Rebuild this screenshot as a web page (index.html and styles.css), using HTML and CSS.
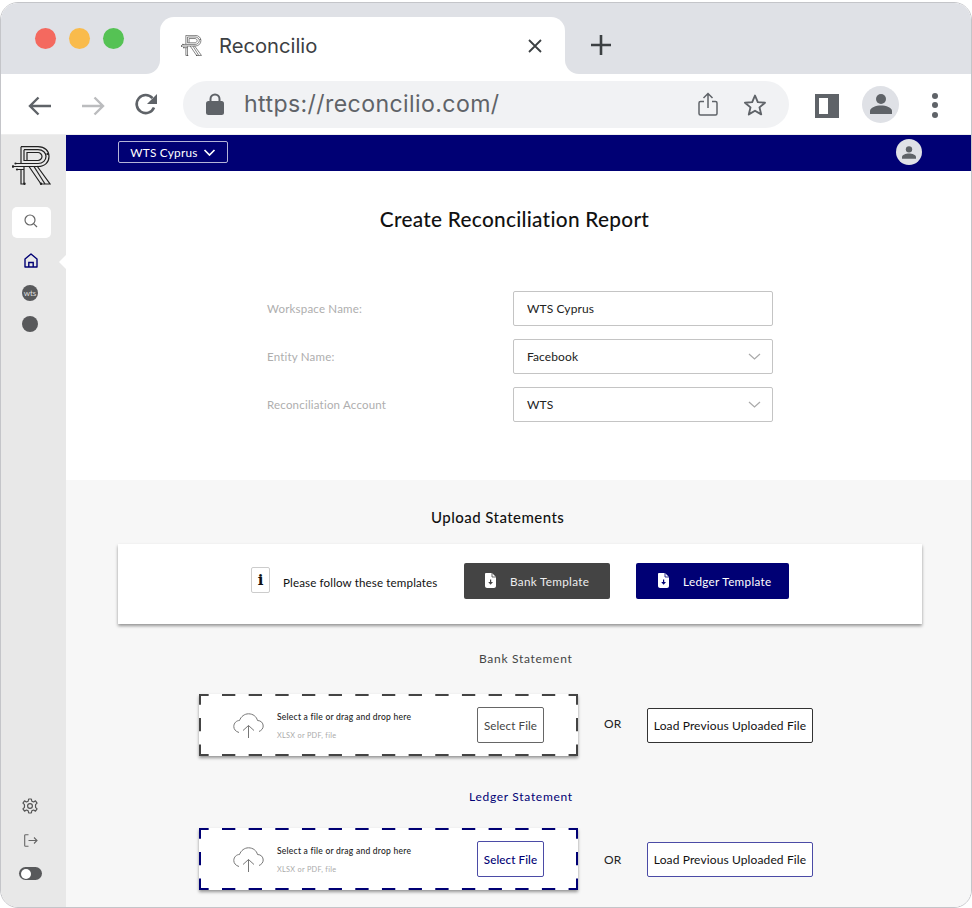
FILE: index.html
```html
<!DOCTYPE html>
<html lang="en">
<head>
<meta charset="utf-8">
<title>Reconcilio</title>
<link rel="stylesheet" href="styles.css">
</head>
<body>
<svg class="defs" width="0" height="0" aria-hidden="true">
  <defs>
    <g id="logo" fill="none" stroke="currentColor" stroke-width="1.2">
      <path d="M9 0.7H26C33 0.7 37 5 37 10.5S33 20.5 26 20.5H0.5"/>
      <path d="M12 3.7H26C31 3.7 34 7 34 10.5S31 17.5 26 17.5H3"/>
      <path d="M12 3.7V14.5H26C28 14.5 30 12.5 30 10.5S28 6.5 26 6.5H15V14.5"/>
      <path d="M9 0.7V17"/>
      <path d="M9 24V38H12V21"/>
      <path d="M5 23.5H12"/>
      <path d="M17 20.5L29 38H38L25 20"/>
      <path d="M22 20.5L33 38"/>
      <g fill="currentColor" stroke="none">
        <circle cx="1" cy="20.5" r="1.3"/>
        <circle cx="3.500" cy="17.500" r="1.100"/>
        <circle cx="5" cy="23.500" r="1.100"/>
        <circle cx="12.500" cy="37.800" r="1.200"/>
        <circle cx="29" cy="37.800" r="1.200"/>
        <circle cx="35.500" cy="8" r="1.100"/>
      </g>
    </g>
    <g id="cloud" fill="none" stroke="#777" stroke-width="1">
      <path d="M6 19.5C2.5 18.5 0.8 16 0.8 13.5C0.8 10 3.5 7.5 6.5 7.5C8 3.5 11.5 0.8 15.5 0.8C20 0.8 23.5 3.5 24.5 7.5C28 7.5 30.2 10 30.2 13C30.2 15.5 28.5 17.5 26 18.5"/>
      <path d="M15.5 25V12.5M10 17.5L15.5 12.5L21 17.5"/>
    </g>
    <g id="doc">
      <path d="M1 0H7L11 4V13C11 14 10 15 9 15H2C1 15 0 14 0 13V1C0 0.5 0.5 0 1 0Z" fill="#fff"/>
      <path d="M7 0V4H11" fill="none" stroke="currentColor" stroke-width="0.8"/>
      <path d="M5 6.5H6.2V9H8L5.6 11.8L3.2 9H5Z" fill="currentColor"/>
    </g>
    <g id="chev">
      <path d="M1 1L6.5 6L12 1" fill="none" stroke="#aaa" stroke-width="1.2"/>
    </g>
  </defs>
</svg>

<div class="window">
  <header class="tabstrip">
    <div class="strip-left">
      <span class="light light-red"></span>
      <span class="light light-yellow"></span>
      <span class="light light-green"></span>
    </div>
    <div class="tab-wrap">
      <div class="tab">
        <svg class="tab-logo" width="21" height="21" viewBox="0 0 39 39"><use href="#logo"/></svg>
        <span class="tab-title">Reconcilio</span>
        <svg class="tab-close" width="14" height="14" viewBox="0 0 14 14"><path d="M1 1L13 13M13 1L1 13" stroke="#3c4043" stroke-width="1.8" fill="none"/></svg>
      </div>
    </div>
    <div class="strip-right">
      <svg width="20" height="20" viewBox="0 0 20 20"><path d="M10 0V20M0 10H20" stroke="#3c4043" stroke-width="2.6" fill="none" stroke-linecap="round"/></svg>
    </div>
  </header>

  <nav class="toolbar">
    <svg class="nav-back" width="24" height="20" viewBox="0 0 24 20"><path d="M23 10H2M10.5 1.5L2 10L10.5 18.5" fill="none" stroke="#5f6368" stroke-width="2.4"/></svg>
    <svg class="nav-forward" width="24" height="20" viewBox="0 0 24 20"><path d="M1 10H22M13.5 1.5L22 10L13.5 18.5" fill="none" stroke="#bbbcbe" stroke-width="2.4"/></svg>
    <svg class="nav-reload" width="24" height="24" viewBox="0 0 24 24"><path d="M20 14.5A9 9 0 1 1 18.5 5.2" fill="none" stroke="#5f6368" stroke-width="2.6"/><path d="M23 1V11H13Z" fill="#5f6368"/></svg>
    <div class="omnibox">
      <svg class="lock" width="18" height="22" viewBox="0 0 18 22"><path d="M4.5 9V6A4.5 4.5 0 0 1 13.5 6V9" fill="none" stroke="#5f6368" stroke-width="2"/><rect x="0" y="8" width="18" height="14" rx="2.5" fill="#5f6368"/></svg>
      <span class="url">https://reconcilio.com/</span>
      <svg class="share" width="20" height="24" viewBox="0 0 20 24"><path d="M6 9.5H2.5C1.500 9.500 1 10 1 11V21.500C1 22.500 1.500 23 2.500 23H17.500C18.500 23 19 22.500 19 21.500V11C19 10 18.500 9.500 17.500 9.500H14" fill="none" stroke="#5f6368" stroke-width="1.500"/><path d="M10 16V1.500M5.500 6L10 1.500L14.500 6" fill="none" stroke="#5f6368" stroke-width="1.500"/></svg>
      <svg class="star" width="24" height="23" viewBox="0 0 24 23"><path d="M12 2.500L14.800 9.100L22 9.700L16.500 14.400L18.200 21.400L12 17.700L5.800 21.400L7.500 14.400L2 9.700L9.200 9.100Z" fill="none" stroke="#5f6368" stroke-width="1.900" stroke-linejoin="round"/></svg>
    </div>
    <div class="panel-icon"></div>
    <div class="avatar">
      <svg width="22" height="20" viewBox="0 0 22 20"><circle cx="11" cy="5" r="5" fill="#5f6368"/><path d="M0 20V17C0 13.500 6 11.500 11 11.500S22 13.500 22 17V20Z" fill="#5f6368"/></svg>
    </div>
    <div class="dots"><span></span><span></span><span></span></div>
  </nav>

  <div class="app">
    <aside class="sidebar">
      <svg class="side-logo" width="39" height="39" viewBox="0 0 39 39"><use href="#logo"/></svg>
      <div class="search-box">
        <svg width="14" height="14" viewBox="0 0 14 14"><circle cx="6" cy="6" r="5" fill="none" stroke="#666" stroke-width="1.200"/><path d="M9.800 9.800L13 13" stroke="#666" stroke-width="1.200"/></svg>
      </div>
      <svg class="side-home" width="14" height="15" viewBox="0 0 14 15"><path d="M1 14V6L7 1L13 6V14Z" fill="none" stroke="#000074" stroke-width="1.400" stroke-linejoin="round"/><path d="M4.800 14V9.500H9.200V14" fill="none" stroke="#000074" stroke-width="1.400"/></svg>
      <span class="side-notch"></span>
      <span class="side-wts">wts</span>
      <span class="side-dot"></span>
      <svg class="side-gear" width="16" height="16" viewBox="0 0 24 24"><path d="M10 1.500H14L14.700 4.800L17.300 6L20.200 4.300L22.600 7.700L20.300 10L20.300 14L22.600 16.300L20.200 19.700L17.300 18L14.700 19.200L14 22.500H10L9.300 19.200L6.700 18L3.800 19.700L1.400 16.300L3.700 14L3.700 10L1.400 7.700L3.800 4.300L6.700 6L9.300 4.800Z" fill="none" stroke="#555" stroke-width="1.800" stroke-linejoin="round"/><circle cx="12" cy="12" r="3.600" fill="none" stroke="#555" stroke-width="1.800"/></svg>
      <svg class="side-exit" width="14" height="13" viewBox="0 0 14 13"><path d="M4.500 0.700H1.500C1 0.700 0.700 1 0.700 1.500V11.500C0.700 12 1 12.300 1.500 12.300H4.500" fill="none" stroke="#666" stroke-width="1.100"/><path d="M4.500 6.500H13M10 3.500L13 6.500L10 9.500" fill="none" stroke="#666" stroke-width="1.100"/></svg>
      <div class="side-toggle"><span></span></div>
    </aside>

    <main class="content">
      <div class="topbar">
        <button class="ws-picker" type="button">WTS Cyprus
          <svg width="13" height="7" viewBox="0 0 12 7"><path d="M1 1L6 6L11 1" fill="none" stroke="#fff" stroke-width="1.700"/></svg>
        </button>
        <div class="top-avatar">
          <svg width="14" height="13" viewBox="0 0 22 20"><circle cx="11" cy="5" r="5" fill="#5f6368"/><path d="M0 20V17C0 13.500 6 11.500 11 11.500S22 13.500 22 17V20Z" fill="#5f6368"/></svg>
        </div>
      </div>

      <section class="create">
        <h1 class="title">Create Reconciliation Report</h1>
        <form class="form">
          <label class="form-label">Workspace Name:</label>
          <div class="field">WTS Cyprus</div>
          <label class="form-label">Entity Name:</label>
          <div class="field">Facebook<svg width="13" height="7" viewBox="0 0 13 7"><use href="#chev"/></svg></div>
          <label class="form-label">Reconciliation Account</label>
          <div class="field">WTS<svg width="13" height="7" viewBox="0 0 13 7"><use href="#chev"/></svg></div>
        </form>
      </section>

      <section class="upload">
        <h2 class="upload-title">Upload Statements</h2>
        <div class="template-card">
          <span class="info">i</span>
          <span class="template-text">Please follow these templates</span>
          <button class="tpl-btn tpl-bank" type="button"><svg width="11" height="15" viewBox="0 0 11 15"><use href="#doc"/></svg>Bank Template</button>
          <button class="tpl-btn tpl-ledger" type="button"><svg width="11" height="15" viewBox="0 0 11 15"><use href="#doc"/></svg>Ledger Template</button>
        </div>

        <h3 class="stmt-label stmt-bank">Bank Statement</h3>
        <div class="stmt-row">
          <div class="drop">
            <svg class="dash dash-grey" width="379" height="62" viewBox="0 0 379 62"><path class="dash-h" d="M0 1H379M0 61H379"/><path class="dash-v" d="M1 0V62M378 0V62"/></svg>
            <svg class="cloud" width="31" height="25" viewBox="0 0 31 25"><use href="#cloud"/></svg>
            <div class="drop-text">
              <div class="drop-main">Select a file or drag and drop here</div>
              <div class="drop-sub">XLSX or PDF, file</div>
            </div>
            <button class="select-btn" type="button">Select File</button>
          </div>
          <span class="or">OR</span>
          <button class="load-btn" type="button">Load Previous Uploaded File</button>
        </div>

        <h3 class="stmt-label stmt-ledger">Ledger Statement</h3>
        <div class="stmt-row stmt-row-ledger">
          <div class="drop">
            <svg class="dash dash-navy" width="379" height="62" viewBox="0 0 379 62"><path class="dash-h" d="M0 1H379M0 61H379"/><path class="dash-v" d="M1 0V62M378 0V62"/></svg>
            <svg class="cloud" width="31" height="25" viewBox="0 0 31 25"><use href="#cloud"/></svg>
            <div class="drop-text">
              <div class="drop-main">Select a file or drag and drop here</div>
              <div class="drop-sub">XLSX or PDF, file</div>
            </div>
            <button class="select-btn select-navy" type="button">Select File</button>
          </div>
          <span class="or">OR</span>
          <button class="load-btn load-navy" type="button">Load Previous Uploaded File</button>
        </div>
      </section>
    </main>
  </div>
</div>
</body>
</html>
```

FILE: styles.css
```css
* { box-sizing: border-box; }
html, body { margin: 0; padding: 0; background: #fff; height: 908px; overflow: hidden; }
body { font-family: "Lato", "Liberation Sans", sans-serif; padding-top: 2px; }
.defs { position: absolute; }
button { font-family: inherit; cursor: pointer; }

.window {
  width: 972px;
  height: 906px;
  border: 1px solid #c4c5c9;
  border-radius: 18px;
  overflow: hidden;
  display: flex;
  flex-direction: column;
}

/* browser chrome */
.tabstrip { height: 71px; display: flex; background: #fff; flex: none; }
.strip-left {
  width: 159px;
  background: #dfe1e6;
  border-bottom-right-radius: 14px;
  display: flex;
  gap: 13px;
  padding: 25px 0 0 34px;
}
.light { width: 21px; height: 21px; border-radius: 50%; }
.light-red { background: #f4695f; }
.light-yellow { background: #f9bb4c; }
.light-green { background: #55c254; }
.tab-wrap { width: 405px; background: #dfe1e6; padding-top: 14px; }
.tab {
  height: 57px;
  background: #fff;
  border-radius: 14px 14px 0 0;
  display: flex;
  align-items: center;
  padding: 0 23px 0 21px;
  font-family: "Inter", sans-serif;
}
.tab-logo { color: #444; margin-top: -1px; }
.tab-title { font-size: 20.200px; color: #3c4043; margin-left: 17px; flex: 1; }
.strip-right {
  flex: 1;
  background: #dfe1e6;
  border-bottom-left-radius: 14px;
  padding: 32px 0 0 26px;
}

.toolbar {
  height: 61px;
  flex: none;
  background: #fff;
  border-bottom: 1px solid #eee;
  display: flex;
  align-items: center;
  padding-left: 27px;
}
.nav-back { margin: 3px 29px 0 0; }
.nav-forward { margin: 3px 29px 0 0; }
.nav-reload { margin: 1px 25px 0 0; }
.omnibox {
  width: 606px;
  height: 47px;
  background: #f1f2f4;
  border-radius: 24px;
  display: flex;
  align-items: center;
  padding-left: 23px;
  font-family: "Inter", sans-serif;
}
.lock { margin-top: -1px; }
.url { font-size: 23.100px; color: #5f6368; margin-left: 20px; width: 446px; letter-spacing: 0.400px; white-space: nowrap; }
.share { margin-left: 8px; margin-top: 0; }
.star { margin-left: 25px; margin-top: 0; }
.panel-icon { width: 24px; height: 24px; margin: 3px 0 0 26px; background: #fff; border: 4px solid #5f6368; border-right-width: 11px; }
.avatar {
  width: 37px;
  height: 37px;
  border-radius: 50%;
  background: #dfe1e6;
  margin-left: 23px;
  display: flex;
  align-items: center;
  justify-content: center;
}
.dots { margin: 2px 0 0 33px; display: flex; flex-direction: column; gap: 3.500px; }
.dots span { width: 6px; height: 6px; border-radius: 50%; background: #5f6368; }

/* app */
.app { flex: 1; display: flex; min-height: 0; }
.sidebar {
  width: 65px;
  flex: none;
  background: #e8e8e8;
  display: flex;
  flex-direction: column;
  padding: 11px 0 0 11px;
  position: relative;
}
.side-logo { color: #222; }
.search-box {
  width: 39px;
  height: 31px;
  background: #fff;
  border-radius: 5px;
  margin-top: 22px;
  display: flex;
  align-items: center;
  justify-content: center;
}
.search-box svg { margin: -4px 2px 0 0; }
.side-home { margin: 15px 0 0 12px; }
.side-notch {
  position: absolute;
  right: 0;
  top: 120px;
  border: 7px solid transparent;
  border-right-color: #fff;
  border-left-width: 0;
}
.side-wts {
  width: 16px;
  height: 16px;
  border-radius: 50%;
  background: #58595b;
  color: #ddd;
  font-size: 8px;
  line-height: 16px;
  text-align: center;
  margin: 17px 0 0 10px;
}
.side-dot { width: 16px; height: 16px; border-radius: 50%; background: #58595b; margin: 15px 0 0 10px; }
.side-gear { margin: auto 0 0 10px; }
.side-exit { margin: 20px 0 0 12px; }
.side-toggle {
  width: 23px;
  height: 13px;
  border-radius: 7px;
  background: #58595b;
  margin: 20px 0 27px 7px;
  padding: 1.500px;
}
.side-toggle span { display: block; width: 10px; height: 10px; border-radius: 50%; background: #fff; }

.content { flex: 1; display: flex; flex-direction: column; min-width: 0; }
.topbar {
  height: 36px;
  flex: none;
  background: #000074;
  display: flex;
  align-items: center;
  justify-content: space-between;
  padding: 0 49px 2px 52px;
}
.ws-picker {
  width: 110px;
  height: 22px;
  background: transparent;
  border: 1px solid #b4b4d8;
  border-radius: 2px;
  color: #fff;
  font-size: 11.800px;
  letter-spacing: 0.250px;
  display: flex;
  align-items: center;
  justify-content: center;
  gap: 5px;
  padding: 0;
}
.top-avatar {
  width: 26px;
  height: 26px;
  border-radius: 50%;
  background: #dfe1e6;
  display: flex;
  align-items: center;
  justify-content: center;
}

.create { height: 309px; flex: none; background: #fff; padding-top: 35px; }
.title { margin: 0 0 0 -8px; font-size: 20.800px; font-weight: 500; line-height: 26px; color: #111; text-align: center; letter-spacing: 0.280px; }
.form {
  margin: 59px 0 0 201px;
  display: grid;
  grid-template-columns: 246px 260px;
  row-gap: 13px;
  align-items: center;
}
.form-label { font-size: 11.500px; color: #aeaeae; letter-spacing: 0.200px; }
.field {
  height: 35px;
  background: #fff;
  border: 1px solid #c4c4c4;
  border-radius: 2px;
  display: flex;
  align-items: center;
  justify-content: space-between;
  padding: 0 11px 0 13px;
  font-size: 12px;
  color: #222;
  letter-spacing: 0.100px;
}

.upload { flex: 1; background: #f7f7f7; padding-top: 27px; min-height: 0; }
.upload-title { margin: 0 0 0 365px; font-size: 15px; font-weight: 500; line-height: 20px; color: #111; letter-spacing: 0.450px; }
.template-card {
  width: 804px;
  height: 80px;
  margin: 17px 0 0 52px;
  background: #fff;
  box-shadow: 0 2px 3px rgba(0,0,0,.4);
  display: flex;
  align-items: center;
  padding-left: 133px;
  position: relative;
}
.info {
  width: 19px;
  height: 26px;
  border: 1px solid #ccc;
  border-radius: 2px;
  font-family: "DejaVu Serif", serif;
  font-weight: 700;
  font-size: 15px;
  line-height: 24px;
  color: #111;
  text-align: center;
  margin-top: -8px;
}
.template-text { margin: -3px 0 0 13px; font-size: 11.600px; color: #111; width: 181px; letter-spacing: 0.130px; white-space: nowrap; }
.tpl-btn {
  height: 36px;
  border: 0;
  border-radius: 2px;
  color: #fff;
  font-size: 11.700px;
  letter-spacing: 0.320px;
  display: flex;
  align-items: center;
  padding: 0 0 0 21px;
  margin-top: -7px;
  white-space: nowrap;
  flex: none;
}
.tpl-btn svg { margin-right: 14px; flex: none; }
.tpl-bank { width: 146px; background: #444; color: #eee; }
.tpl-bank svg { color: #444; }
.tpl-ledger { width: 153px; background: #000074; margin-left: 26px; padding-left: 22px; }
.tpl-ledger svg { color: #000074; }

.stmt-label { margin: 0; font-size: 12px; font-weight: 400; line-height: 16px; letter-spacing: 0.700px; }
.stmt-bank { margin: 27px 0 0 413px; color: #444; }
.stmt-ledger { margin: 33px 0 0 403px; color: #000074; letter-spacing: 0.700px; }
.stmt-row { display: flex; align-items: center; padding-left: 133px; margin-top: 27px; }
.stmt-row-ledger { margin-top: 23px; }
.drop {
  width: 379px;
  height: 62px;
  background: #fff;
  box-shadow: 0 2px 3px rgba(0,0,0,.4);
  display: flex;
  align-items: center;
  position: relative;
  padding-left: 34px;
  flex: none;
}
.dash { position: absolute; left: 0; top: 0; fill: none; stroke-width: 2; }
.dash-grey { stroke: #444; }
.dash-navy { stroke: #000074; }
.dash-h { stroke-dasharray: 13.330 13.330; stroke-dashoffset: 3.670; }
.dash-v { stroke-dasharray: 13.330 13.330; stroke-dashoffset: 2.700; }
.cloud { margin-top: 0; }
.drop-text { margin: 2px 0 0 13px; width: 200px; }
.drop-main { font-size: 8.500px; font-weight: 500; color: #222; line-height: 12px; letter-spacing: 0.240px; white-space: nowrap; }
.drop-sub { font-size: 7.300px; color: #aaa; line-height: 12px; margin-top: 7px; letter-spacing: 0.300px; }
.select-btn {
  width: 67px;
  height: 36px;
  background: #fff;
  border: 1px solid #666;
  border-radius: 2px;
  font-size: 11.600px;
  color: #444;
  padding: 0;
  letter-spacing: 0.100px;
  position: relative;
}
.select-navy { border-color: #4b4ba6; color: #000074; font-weight: 500; }
.or { font-size: 12px; color: #222; margin: -3px 0 0 26px; width: 43px; letter-spacing: 0.200px; }
.stmt-row-ledger .or { margin-top: 1px; }
.load-btn {
  width: 166px;
  height: 35px;
  background: #fff;
  border: 1px solid #333;
  border-radius: 2px;
  font-size: 12px;
  color: #111;
  padding: 0;
  letter-spacing: 0.120px;
}
.load-navy { border-color: #4b4ba6; }
```
